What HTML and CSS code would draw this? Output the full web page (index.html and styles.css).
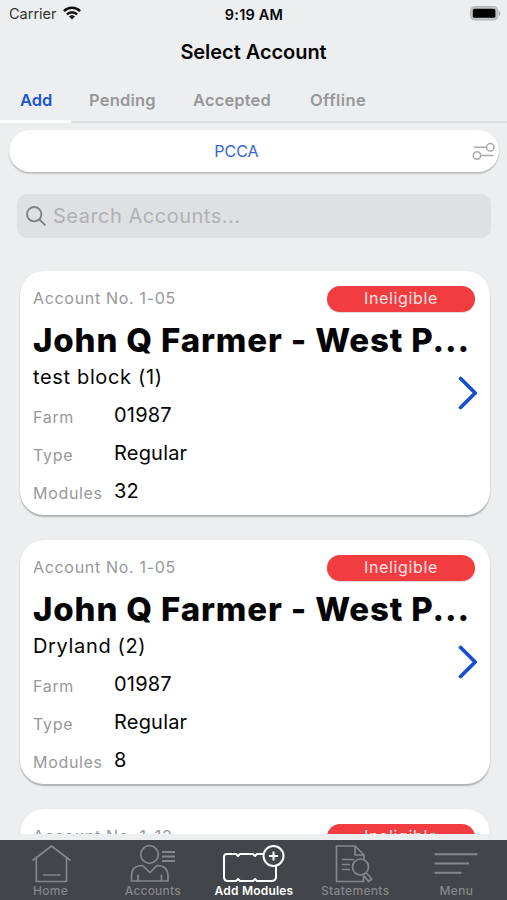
FILE: index.html
```html
<!DOCTYPE html>
<html lang="en">
<head>
    <meta charset="UTF-8">
    <meta name="viewport" content="width=device-width, initial-scale=1.0">
    <title>Select Account</title>
    <link rel="stylesheet" href="styles.css">
</head>
<body>
    <div class="status-bar">
        <div class="carrier">
            <span>Carrier</span>
            <svg width="18" height="14" viewBox="0 0 18 14" fill="none" stroke="#111" stroke-width="2.6">
                <path d="M0.9 5.1a11.5 11.5 0 0 1 16.2 0"></path>
                <path d="M3.9 8.3a7.2 7.2 0 0 1 10.2 0"></path>
                <path d="M9 13.6L6 10.6a4.2 4.2 0 0 1 6 0z" fill="#111" stroke="none"></path>
            </svg>
        </div>
        <span class="clock">9:19 AM</span>
        <div class="battery">
            <svg width="31" height="15" viewBox="0 0 31 15">
                <rect x="0.7" y="0.7" width="27" height="13.2" rx="4" fill="#c5c6c7" stroke="#b4b5b6" stroke-width="1.2"></rect>
                <rect x="2.8" y="2.8" width="22.6" height="9" rx="1.6" fill="#000"></rect>
                <path d="M28.8 5v4.8q1.6-.8 1.6-2.4t-1.6-2.4z" fill="#a6a7a8"></path>
            </svg>
        </div>
    </div>

    <h1 class="title">Select Account</h1>

    <nav class="tabs">
        <a class="tab active">Add</a>
        <a class="tab pending">Pending</a>
        <a class="tab accepted">Accepted</a>
        <a class="tab offline">Offline</a>
    </nav>

    <div class="filter">
        <span>PCCA</span>
        <svg class="filter-icon" width="24" height="20" viewBox="0 0 24 20" fill="none" stroke="#aaa" stroke-width="1.5">
            <path d="M2 6.3h12.5M9 14.5h12.5"></path>
            <circle cx="18.3" cy="6.3" r="3.7"></circle>
            <circle cx="5" cy="14.5" r="3.7"></circle>
        </svg>
    </div>

    <div class="search">
        <svg width="20" height="20" viewBox="0 0 20 20" fill="none" stroke="#808184" stroke-width="1.9" stroke-linecap="round">
            <circle cx="8.2" cy="8.2" r="7.2"></circle>
            <path d="M13.5 13.5l5.3 5.3"></path>
        </svg>
        <span>Search Accounts...</span>
    </div>

    <main class="list">
        <article class="card">
            <div class="card-head">
                <span class="account">Account No. 1-05</span>
                <span class="badge">Ineligible</span>
            </div>
            <h2 class="name">John Q Farmer - West P...</h2>
            <div class="block">test block (1)</div>
            <dl class="details">
                <div class="row"><dt>Farm</dt><dd>01987</dd></div>
                <div class="row"><dt>Type</dt><dd>Regular</dd></div>
                <div class="row"><dt>Modules</dt><dd>32</dd></div>
            </dl>
            <svg class="chevron" width="20" height="34" viewBox="0 0 20 34" fill="none" stroke="#164fd0" stroke-width="3.8" stroke-linecap="round" stroke-linejoin="round">
                <path d="M2.6 2.5L17.2 17L2.6 31.5"></path>
            </svg>
        </article>

        <article class="card">
            <div class="card-head">
                <span class="account">Account No. 1-05</span>
                <span class="badge">Ineligible</span>
            </div>
            <h2 class="name">John Q Farmer - West P...</h2>
            <div class="block">Dryland (2)</div>
            <dl class="details">
                <div class="row"><dt>Farm</dt><dd>01987</dd></div>
                <div class="row"><dt>Type</dt><dd>Regular</dd></div>
                <div class="row"><dt>Modules</dt><dd>8</dd></div>
            </dl>
            <svg class="chevron" width="20" height="34" viewBox="0 0 20 34" fill="none" stroke="#164fd0" stroke-width="3.8" stroke-linecap="round" stroke-linejoin="round">
                <path d="M2.6 2.5L17.2 17L2.6 31.5"></path>
            </svg>
        </article>

        <article class="card">
            <div class="card-head">
                <span class="account">Account No. 1-12</span>
                <span class="badge">Ineligible</span>
            </div>
        </article>
    </main>

    <footer class="tab-bar">
        <a class="nav-item">
            <svg width="40" height="40" viewBox="0 0 40 40">
                <path d="M1.5 16.500L20.500 2L39.500 16.500M5.300 14V37.500H35.500V14M12 31H29.500"></path>
            </svg>
            <span>Home</span>
        </a>
        <a class="nav-item accounts">
            <svg width="46" height="40" viewBox="0 0 46 40">
                <circle cx="19.500" cy="10.500" r="8.800"></circle>
                <path d="M1.500 37V32Q1.500 21.500 12.500 21.500L20 28.500L27 21.500Q38 21.500 38 32V37ZM8 37V30.500M31.500 37V30.500"></path>
                <path d="M32 8H45M32 12.500H45M32 17H45" stroke-width="2"></path>
            </svg>
            <span>Accounts</span>
        </a>
        <a class="nav-item current">
            <svg width="64" height="40" viewBox="0 0 64 40">
                <path d="M41 10H35L33 12L31 10H18L16 12L14 10H5Q2 10 2 13V33Q2 37 6 37H14L16 35L18 37H31L33 35L35 37H49Q54 37 54 33V22"></path>
                <circle cx="51.500" cy="12" r="10"></circle>
                <path d="M51.500 7.500V16.500M47 12H56"></path>
            </svg>
            <span>Add Modules</span>
        </a>
        <a class="nav-item">
            <svg width="42" height="40" viewBox="0 0 42 40">
                <path d="M30 16V11L21 2H2.500V37.500H29.500V32M21 2V11H30M8 15.500H20M8 20.500H16M8 25.500H16"></path>
                <circle cx="26.500" cy="23" r="8"></circle>
                <path d="M29.800 31.500L34.500 37.500L37.800 35L32.600 29.300"></path>
            </svg>
            <span>Statements</span>
        </a>
        <a class="nav-item menu">
            <svg width="44" height="40" viewBox="0 0 44 40">
                <path d="M0.500 10.200H43.500M0.500 19.500H35M0.500 28.800H27.500" stroke-width="2"></path>
            </svg>
            <span>Menu</span>
        </a>
    </footer>
</body>
</html>
```
FILE: styles.css
```css
:root {
    --background-color: #edeeef;
    --nav-color: #424549;
    --accent-color: #2256cc;
    --muted-color: #97989a;
    --danger-color: #f13c40;
}

* {
    box-sizing: border-box;
}

body {
    margin: 0;
    width: 507px;
    height: 900px;
    overflow: hidden;
    display: flex;
    flex-direction: column;
    background-color: var(--background-color);
    color: #050505;
    font-family: Inter, "Liberation Sans", sans-serif;
}

svg {
    display: block;
    flex: none;
}

.status-bar {
    height: 28px;
    padding: 0 6px 0 9px;
    display: grid;
    grid-template-columns: 1fr auto 1fr;
    align-items: center;
    font-size: 14.5px;
}

.carrier {
    display: flex;
    align-items: center;
    gap: 6px;
    color: #333;
    margin-top: -2px;
}

.clock {
    font-weight: 600;
    font-size: 14.5px;
    letter-spacing: 0.2px;
    margin-left: -2px;
}

.battery {
    justify-self: end;
    margin-top: -2px;
}

.title {
    margin: 0;
    height: 50px;
    line-height: 49px;
    text-align: center;
    font-size: 20px;
    font-weight: 600;
    letter-spacing: -0.05px;
}

.tabs {
    height: 45px;
    display: flex;
    border-bottom: 2px solid #dcddde;
}

.tab {
    height: 45px;
    line-height: 45px;
    font-size: 16.5px;
    font-weight: 600;
    color: var(--muted-color);
}

.tab.active {
    width: 71px;
    padding-left: 20px;
    color: var(--accent-color);
    border-bottom: 3px solid #fff;
}

.tab.pending {
    width: 122px;
    padding-left: 18px;
    letter-spacing: 0.2px;
}

.tab.accepted {
    width: 117px;
    letter-spacing: 0.15px;
}

.tab.offline {
    letter-spacing: 0.4px;
}

.filter {
    position: relative;
    height: 42px;
    margin: 7px 8px 0 9px;
    border-radius: 21px;
    background-color: #fff;
    box-shadow: 0 1.5px 1.5px rgba(0, 0, 0, 0.25);
    text-align: center;
    line-height: 43px;
    font-size: 16px;
    color: #3267d0;
    padding-right: 35px;
}

.filter-icon {
    position: absolute;
    right: 3px;
    top: 11px;
}

.search {
    height: 44px;
    margin: 22px 16px 0 17px;
    padding-left: 9px;
    border-radius: 11px;
    background-color: #dfe0e2;
    display: flex;
    align-items: center;
    gap: 7px;
    color: #b0b1b4;
    font-size: 20px;
    letter-spacing: 0.5px;
}

.list {
    height: 596px;
    overflow: hidden;
    padding: 33px 17px 0 20px;
    display: flex;
    flex-direction: column;
    gap: 25px;
}

.card {
    position: relative;
    flex: none;
    height: 244px;
    padding: 15px 15px 0 13px;
    border-radius: 24px;
    background-color: #fff;
    box-shadow: 0 1.5px 1.5px rgba(0, 0, 0, 0.26);
}

.card-head {
    display: flex;
    justify-content: space-between;
    height: 26px;
    line-height: 25px;
}

.account {
    font-size: 16px;
    letter-spacing: 0.68px;
    color: var(--muted-color);
}

.badge {
    width: 148px;
    height: 26px;
    border-radius: 13px;
    text-align: center;
    background-color: var(--danger-color);
    box-shadow: 0 1px 1px rgba(0, 0, 0, 0.15);
    color: #ffe2e2;
    font-size: 16px;
    letter-spacing: 0.65px;
}

.name {
    margin: 5px 0 0;
    height: 46px;
    line-height: 46px;
    white-space: nowrap;
    font-size: 33px;
    font-weight: 800;
    letter-spacing: 0.85px;
}

.block {
    height: 28px;
    line-height: 28px;
    font-size: 20px;
    letter-spacing: 0.65px;
}

.details {
    margin: 5px 0 0;
}

.row {
    height: 38px;
    display: flex;
    line-height: 38px;
}

.row dt {
    width: 81px;
    padding-top: 2px;
    font-size: 16px;
    letter-spacing: 0.68px;
    color: var(--muted-color);
}

.row dd {
    margin: 0;
    font-size: 20px;
    letter-spacing: 0.2px;
}

.chevron {
    position: absolute;
    right: 12px;
    top: 105px;
}

.tab-bar {
    height: 60px;
    margin-top: auto;
    padding-top: 4px;
    background-color: var(--nav-color);
    display: flex;
}

.nav-item {
    flex: 1;
    display: flex;
    flex-direction: column;
    align-items: center;
    color: #85878a;
    font-size: 12px;
    font-weight: 500;
    letter-spacing: 0.35px;
    line-height: 14px;
}

.nav-item.accounts {
    letter-spacing: 0.2px;
    padding-left: 1px;
}

.nav-item svg {
    fill: none;
    stroke: currentColor;
    stroke-width: 1.7;
    stroke-linejoin: round;
}

.nav-item.current {
    color: #fff;
    font-weight: 600;
    letter-spacing: 0.2px;
}

.nav-item.current svg {
    stroke-width: 2;
}
```
